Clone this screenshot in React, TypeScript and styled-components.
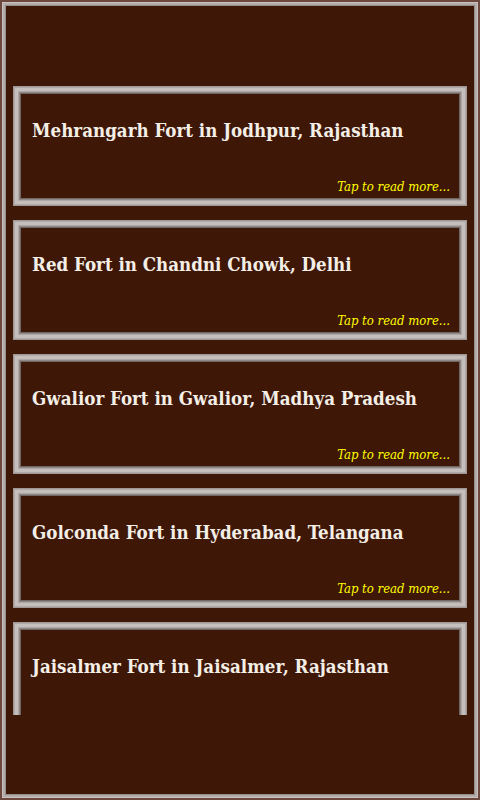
import React from "react";
import styled, { createGlobalStyle } from "styled-components";

const Global = createGlobalStyle`
  html, body { margin: 0; padding: 0; background: #3f1707; }
  #root { width: 480px; height: 800px; }
`;

const Frame = styled.div`
  box-sizing: border-box;
  width: 480px;
  height: 800px;
  padding: 6px;
  background: #3f1707;
  box-shadow:
    inset 0 0 0 2px #6d473d,
    inset 0 0 0 3px #c6c0bf,
    inset 0 0 0 5px #b3acaa,
    inset 0 0 0 6px #958d8a;
  display: flex;
  flex-direction: column;
`;

const TopSpace = styled.div`
  height: 80px;
  flex: none;
`;

const List = styled.div`
  height: 629px;
  flex: none;
  overflow: hidden;
  padding: 0 7px;
  display: flex;
  flex-direction: column;
  gap: 14px;
`;

const Card = styled.div`
  box-sizing: border-box;
  flex: none;
  height: 120px;
  padding: 8px;
  background: #3f1707;
  box-shadow:
    inset 0 0 0 1px #a09896,
    inset 0 0 0 2px #b0a9a7,
    inset 0 0 0 5px #c4bebd,
    inset 0 0 0 6px #aea6a4,
    inset 0 0 0 7px #908785,
    inset 0 0 0 8px #716764;
  display: flex;
  flex-direction: column;
`;

const Title = styled.div`
  font-family: "DejaVu Serif Condensed", "DejaVu Serif", serif;
  font-stretch: condensed;
  font-weight: bold;
  font-size: 18.6px;
  line-height: 26px;
  color: #f3eee6;
  padding: 24px 0 0 11px;
  white-space: nowrap;
`;

const More = styled.div`
  margin-top: auto;
  font-family: "DejaVu Serif Condensed", "DejaVu Serif", serif;
  font-stretch: condensed;
  font-style: italic;
  font-size: 13px;
  line-height: 18px;
  color: #ffff00;
  text-align: right;
  padding: 0 9px 2px 0;
`;

const forts = [
  { title: "Mehrangarh Fort in Jodhpur, Rajasthan", more: true },
  { title: "Red Fort in Chandni Chowk, Delhi", more: true },
  { title: "Gwalior Fort in Gwalior, Madhya Pradesh", more: true },
  { title: "Golconda Fort in Hyderabad, Telangana", more: true },
  { title: "Jaisalmer Fort in Jaisalmer, Rajasthan", more: false },
];

export default function App() {
  return (
    <>
      <Global />
      <Frame>
        <TopSpace />
        <List>
          {forts.map((f) => (
            <Card key={f.title}>
              <Title>{f.title}</Title>
              {f.more && <More>Tap to read more...</More>}
            </Card>
          ))}
        </List>
      </Frame>
    </>
  );
}
